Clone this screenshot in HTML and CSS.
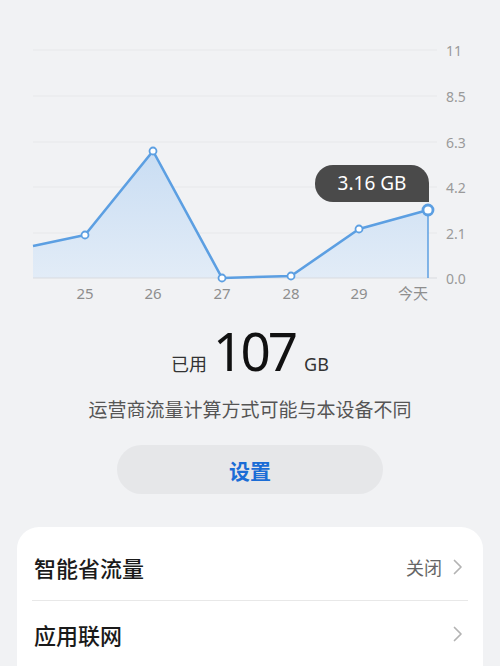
FILE: index.html
```html
<html>
<head>
<title>流量管理</title>
<link rel="stylesheet" href="styles.css">
</head>
<body>

<div class="chart">
<svg class="plot" width="500" height="310" viewBox="0 0 500 310">
<defs>
<linearGradient id="fill" x1="0" y1="0" x2="0" y2="1">
<stop offset="0" stop-color="#c9ddf3"/>
<stop offset="1" stop-color="#e2ecf7"/>
</linearGradient>
</defs>
<g stroke="#e7e8ea" stroke-width="1">
<line x1="33" y1="50" x2="437" y2="50"/>
<line x1="33" y1="96" x2="437" y2="96"/>
<line x1="33" y1="142" x2="437" y2="142"/>
<line x1="33" y1="187" x2="437" y2="187"/>
<line x1="33" y1="233" x2="437" y2="233"/>
</g>
<polygon fill="url(#fill)" points="33,278 33,246 85,235 153,151 222,278 291,276 359,229 428,210 428,278"/>
<line x1="33" y1="278" x2="437" y2="278" stroke="#d9dbdf" stroke-width="1"/>
<line x1="428" y1="210" x2="428" y2="278" stroke="#5c9fe2" stroke-width="1.5"/>
<polyline fill="none" stroke="#5c9fe2" stroke-width="2.6" stroke-linejoin="round" points="33,246 85,235 153,151 222,278 291,276 359,229 428,210"/>
<g fill="#fff" stroke="#5c9fe2" stroke-width="1.8">
<circle cx="85" cy="235" r="3.5"/>
<circle cx="153" cy="151" r="3.5"/>
<circle cx="222" cy="278" r="3.5"/>
<circle cx="291" cy="276" r="3.5"/>
<circle cx="359" cy="229" r="3.5"/>
</g>
<circle cx="428" cy="210" r="5" fill="#fff" stroke="#5c9fe2" stroke-width="2.8"/>
<g class="ylabel">
<text x="446" y="56">11</text>
<text x="446" y="102">8.5</text>
<text x="446" y="148">6.3</text>
<text x="446" y="193">4.2</text>
<text x="446" y="239">2.1</text>
<text x="446" y="284">0.0</text>
</g>
<g class="xlabel">
<text x="85" y="299">25</text>
<text x="153" y="299">26</text>
<text x="222" y="299">27</text>
<text x="291" y="299">28</text>
<text x="359" y="299">29</text>
<text x="413" y="299">今天</text>
</g>
</svg>
<div class="tip">3.16 GB</div>
</div>

<div class="usage">
<span class="unit">已用</span>
<span class="amount">107</span>
<span class="unit">GB</span>
</div>
<p class="note">运营商流量计算方式可能与本设备不同</p>
<div class="btn-wrap">
<button class="set-btn">设置</button>
</div>

<div class="card">
<div class="row">
<span class="row-title">智能省流量</span>
<span class="row-right">
<span class="row-value">关闭</span>
<svg class="chev" width="10" height="16" viewBox="0 0 10 16"><path d="M1.5 1.5 L8 8 L1.5 14.5" fill="none" stroke="#b3b3b3" stroke-width="1.7" stroke-linecap="round" stroke-linejoin="round"/></svg>
</span>
</div>
<div class="divider"></div>
<div class="row">
<span class="row-title">应用联网</span>
<span class="row-right">
<svg class="chev" width="10" height="16" viewBox="0 0 10 16"><path d="M1.5 1.5 L8 8 L1.5 14.5" fill="none" stroke="#b3b3b3" stroke-width="1.7" stroke-linecap="round" stroke-linejoin="round"/></svg>
</span>
</div>
</div>

</body>
</html>
```

FILE: styles.css
```css
body{
margin: 0;
background-color: #f1f2f4;
font-family: "Noto Sans", "Noto Sans CJK SC", sans-serif;
overflow: hidden;
}
.chart{
position: relative;
height: 310px;
}
.plot{
display: block;
}
.ylabel text{
font-size: 14px;
fill: #9a9a9a;
}
.xlabel text{
font-size: 15px;
fill: #8e8e8e;
text-anchor: middle;
}
.tip{
position: absolute;
left: 315px;
top: 165px;
width: 114px;
height: 37px;
line-height: 37px;
text-align: center;
background-color: #4a4a4a;
color: #fff;
font-size: 19px;
border-radius: 18px 18px 0 18px;
}
.usage{
display: flex;
justify-content: center;
align-items: baseline;
gap: 6px;
margin-top: 13px;
height: 56px;
line-height: 56px;
color: #111;
}
.amount{
font-size: 53px;
letter-spacing: -3px;
margin-right: 3px;
}
.unit{
font-size: 18px;
color: #333;
}
.note{
margin: 16px 0 0 0;
text-align: center;
font-size: 19px;
color: #555;
}
.btn-wrap{
display: flex;
justify-content: center;
margin-top: 22px;
}
.set-btn{
width: 266px;
height: 49px;
border: none;
border-radius: 25px;
background-color: #e6e7e9;
color: #1b6dd6;
font-family: "Noto Sans CJK SC", sans-serif;
font-size: 21px;
font-weight: bold;
}
.card{
margin: 33px 17px 0 17px;
padding: 7px 0 30px 0;
background-color: #fff;
border-radius: 22px;
}
.row{
display: flex;
justify-content: space-between;
align-items: center;
height: 66px;
padding: 0 20px 0 17px;
}
.row-title{
font-size: 22px;
color: #1a1a1a;
font-weight: 500;
}
.row-right{
display: flex;
align-items: center;
gap: 11px;
}
.row-value{
font-size: 18px;
color: #666;
}
.chev{
display: block;
}
.divider{
height: 1px;
margin: 0 15px;
background-color: #e8e8e8;
}
```
